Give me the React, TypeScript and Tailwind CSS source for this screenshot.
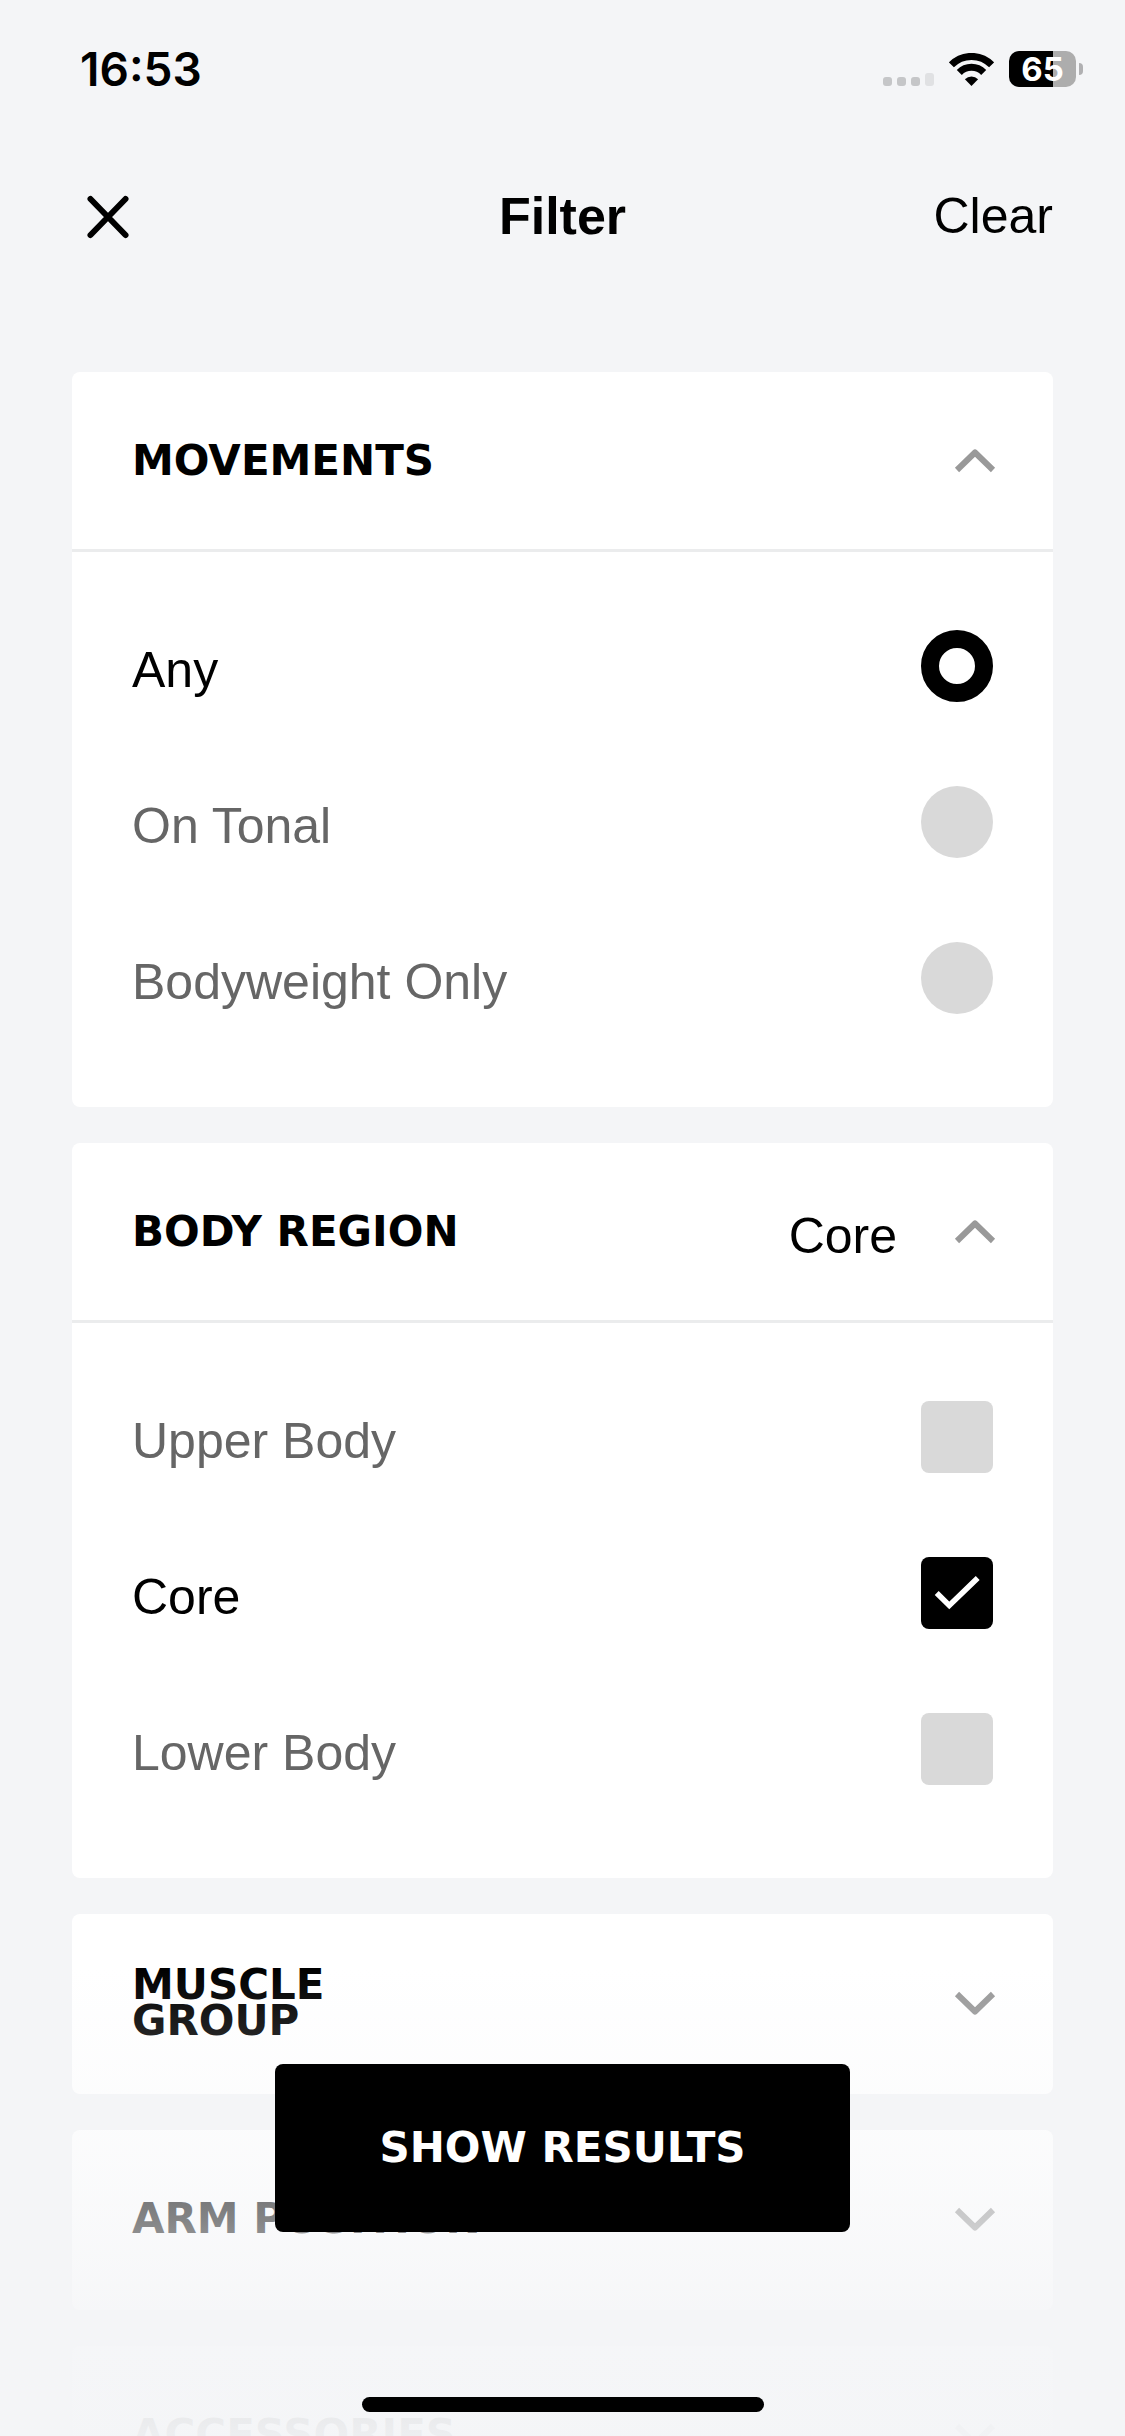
import { FC, ReactNode, useState } from 'react';
import clsx from 'clsx';

interface SectionProps {
    title: string;
    summary?: string;
    open?: boolean;
    onToggle: () => void;
    children?: ReactNode;
}

interface OptionProps {
    type: 'radio' | 'checkbox';
    name: string;
    label: string;
    checked: boolean;
    onChange: () => void;
}

const MOVEMENTS = ['Any', 'On Tonal', 'Bodyweight Only'];
const REGIONS = ['Upper Body', 'Core', 'Lower Body'];

const headingFont = "font-['DejaVu_Sans',sans-serif] text-[42px] leading-9 font-bold";

const StatusBar: FC = () => (
    <div className="flex h-[138px] shrink-0 items-center justify-between pr-[42px] pl-20">
        <span className="font-['Inter',sans-serif] text-[46px] leading-none font-semibold">16:53</span>
        <div className="flex items-center gap-[15px]">
            <svg width="51" height="33" viewBox="0 0 51 33" aria-hidden="true">
                <g fill="#c5c6c8">
                    <rect x="0" y="24" width="9" height="9" rx="3" />
                    <rect x="14" y="24" width="9" height="9" rx="3" />
                    <rect x="28" y="24" width="9" height="9" rx="3" />
                </g>
                <rect x="42" y="20" width="9" height="13" rx="3" fill="#e0e1e3" />
            </svg>
            <svg width="45" height="33" viewBox="0 0 45 33" fill="none" stroke="#000" strokeWidth="7" aria-hidden="true">
                <path d="M2.4 11.9A28 28 0 0 1 42.6 11.9" />
                <path d="M10.3 19.5A17 17 0 0 1 34.7 19.5" />
                <path d="M22.5 33L15.9 26.2A9.3 9.3 0 0 1 29.1 26.2Z" fill="#000" stroke="none" />
            </svg>
            <div className="flex items-center gap-[3px]">
                <div className="flex h-9 w-[67px] items-center justify-center rounded-[10px] bg-[linear-gradient(90deg,#000_65%,#adadad_65%)] font-['Inter',sans-serif] text-[33px] leading-none font-bold text-white">65</div>
                <div className="h-3 w-1 rounded-r-full bg-[#b0b0b2]" />
            </div>
        </div>
    </div>
);

const Chevron: FC<{ open?: boolean }> = ({ open }) => (
    <svg width="36" height="36" viewBox="0 0 36 36" fill="none" stroke="#999" strokeWidth="6" strokeLinejoin="round" className={clsx('shrink-0 overflow-visible', !open && 'rotate-180')} aria-hidden="true">
        <path d="M0 27L18 9.5L36 27" />
    </svg>
);

const Section: FC<SectionProps> = ({ title, summary, open, onToggle, children }) => (
    <section className="shrink-0 overflow-hidden rounded-lg bg-white">
        <h2>
            <button type="button" onClick={onToggle} aria-expanded={!!open} className={clsx('flex h-[180px] w-full items-center border-b-[3px] px-[60px] text-left', open ? 'border-[#ebeced]' : 'border-transparent')}>
                <span className={clsx(headingFont, 'max-w-[360px]')}>{title}</span>
                {summary && <span className="ml-auto pt-2">{summary}</span>}
                <span className={summary ? 'ml-[60px]' : 'ml-auto'}><Chevron open={open} /></span>
            </button>
        </h2>
        {open && <div className="pt-9 pb-[51px]">{children}</div>}
    </section>
);

const Option: FC<OptionProps> = ({ type, name, label, checked, onChange }) => (
    <label className={clsx('flex h-[156px] items-center justify-between px-[60px]', checked ? 'text-black' : 'text-[#666]')}>
        <span className="pt-2">{label}</span>
        <span className="grid">
            <input type={type} name={name} checked={checked} onChange={onChange} className={clsx('col-start-1 row-start-1 size-[72px] appearance-none', type === 'radio' ? 'rounded-full checked:border-[18px] checked:border-black' : 'rounded-lg checked:bg-black', !checked && 'bg-[#d9d9d9]')} />
            {type === 'checkbox' && checked && (
                <svg width="72" height="72" viewBox="0 0 72 72" fill="none" stroke="#fff" strokeWidth="5.6" className="pointer-events-none col-start-1 row-start-1" aria-hidden="true">
                    <path d="M15.7 36L28.3 48.4L56.7 21" />
                </svg>
            )}
        </span>
    </label>
);

export default function App() {
    const [movement, setMovement] = useState('Any');
    const [regions, setRegions] = useState(['Core']);
    const [opened, setOpened] = useState(['MOVEMENTS', 'BODY REGION']);

    const flip = (list: string[], item: string) => (list.includes(item) ? list.filter((i) => i !== item) : [...list, item]);
    const toggle = (title: string) => () => setOpened(flip(opened, title));
    const clear = () => { setMovement('Any'); setRegions([]); };

    return (
        <div className="relative flex h-screen flex-col overflow-hidden bg-[#f4f5f7] font-['Liberation_Sans',Arial,sans-serif] text-[50px] leading-[60px] text-black">
            <StatusBar />
            <header className="grid h-[156px] shrink-0 grid-cols-[1fr_auto_1fr] items-center px-[72px]">
                <button type="button" aria-label="Close" className="justify-self-start">
                    <svg width="72" height="72" viewBox="0 0 72 72" fill="none" stroke="#000" strokeWidth="6" strokeLinecap="round" aria-hidden="true">
                        <path d="M18.5 19L53.5 55M53.5 19L18.5 55" />
                    </svg>
                </button>
                <h1 className="text-[52px] font-bold">Filter</h1>
                <button type="button" onClick={clear} className="justify-self-end">Clear</button>
            </header>

            <main className="flex min-h-0 flex-1 flex-col gap-9 overflow-hidden px-[72px] pt-[78px]">
                <Section title="MOVEMENTS" open={opened.includes('MOVEMENTS')} onToggle={toggle('MOVEMENTS')}>
                    {MOVEMENTS.map((m) => <Option key={m} type="radio" name="movement" label={m} checked={movement === m} onChange={() => setMovement(m)} />)}
                </Section>
                <Section title="BODY REGION" summary={regions.join(', ')} open={opened.includes('BODY REGION')} onToggle={toggle('BODY REGION')}>
                    {REGIONS.map((r) => <Option key={r} type="checkbox" name="region" label={r} checked={regions.includes(r)} onChange={() => setRegions(flip(regions, r))} />)}
                </Section>
                <Section title="MUSCLE GROUP" open={opened.includes('MUSCLE GROUP')} onToggle={toggle('MUSCLE GROUP')} />
                <Section title="ARM POSITION" open={opened.includes('ARM POSITION')} onToggle={toggle('ARM POSITION')} />
                <Section title="ACCESSORIES" open={opened.includes('ACCESSORIES')} onToggle={toggle('ACCESSORIES')} />
            </main>

            {/* fade over the end of the list, with the action on top */}
            <div className="pointer-events-none absolute inset-x-0 bottom-0 flex h-[468px] flex-col items-center justify-end bg-[linear-gradient(to_bottom,#f4f5f700,#f4f5f78a_54%,#f4f5f7e6_80%,#f4f5f7f8)] pb-6">
                <button type="button" className={clsx(headingFont, 'pointer-events-auto mb-[165px] rounded-lg bg-black px-[104px] py-[66px] text-white')}>SHOW RESULTS</button>
                <div className="h-[15px] w-[402px] rounded-full bg-black" />
            </div>
        </div>
    );
}
